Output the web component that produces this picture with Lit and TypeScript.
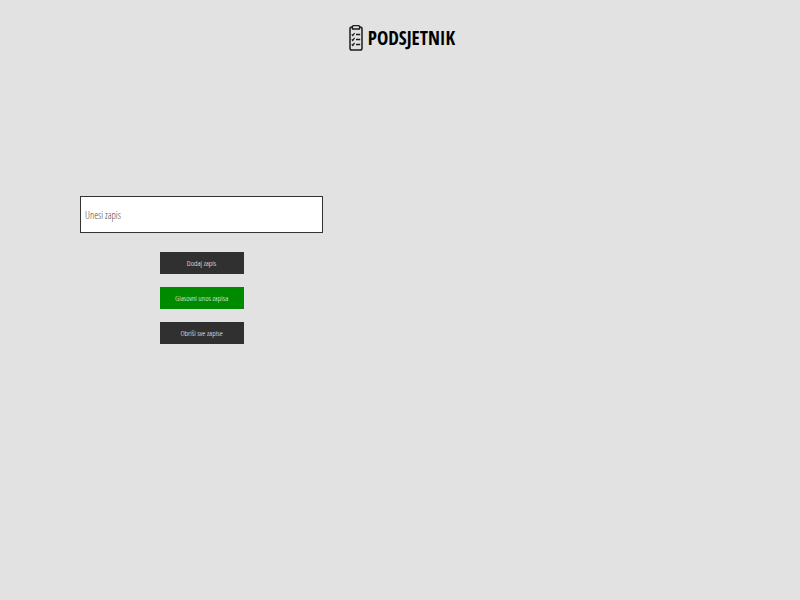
import { LitElement, html, css } from "lit";
import { customElement, state } from "lit/decorators.js";

@customElement("app-root")
export class AppRoot extends LitElement {
  @state() private notes: string[] = [];

  static styles = css`
    :host {
      display: block;
      min-height: 100vh;
      background: #e2e2e2;
      font-family: "Open Sans Condensed Light", "Roboto Condensed", "Liberation Sans", Arial, sans-serif;
      color: #000;
    }
    * {
      box-sizing: border-box;
    }
    .header {
      display: flex;
      justify-content: center;
      align-items: center;
      gap: 5px;
      padding: 24px 0 0 4px;
    }
    .logo {
      width: 14px;
      height: 27px;
    }
    .title {
      margin: 0;
      font-family: "Open Sans Condensed", "Roboto Condensed", "Liberation Sans", Arial, sans-serif;
      font-size: 19px;
      line-height: 24px;
      font-weight: 700;
    }
    .main {
      display: grid;
      grid-template-columns: 1fr 1fr;
      padding: 145px 10% 0;
    }
    .form {
      display: flex;
      flex-direction: column;
      align-items: center;
      gap: 13px;
      width: 76%;
    }
    .field {
      width: 100%;
      height: 37px;
      margin-bottom: 6px;
      padding: 0 4px;
      border: 1px solid #333;
      border-radius: 0;
      outline: 0;
      background: #fff;
      font-family: inherit;
      font-size: 10px;
    }
    .field::placeholder {
      color: #444;
      opacity: 1;
    }
    .button {
      width: 84px;
      height: 22px;
      padding: 0 0 2px;
      border: 0;
      background: #303030;
      color: #fff;
      font-family: inherit;
      font-size: 8px;
      cursor: pointer;
    }
    .voice {
      background: #008a00;
    }
    .notes {
      margin: 0;
      padding: 0 0 0 16px;
      font-size: 10px;
    }
  `;

  private add(event: Event) {
    event.preventDefault();
    const field = this.renderRoot.querySelector<HTMLInputElement>(".field")!;
    if (field.value.trim()) this.notes = [...this.notes, field.value.trim()];
    field.value = "";
  }

  render() {
    return html`
      <header class="header">
        <svg class="logo" viewBox="0 0 14 27" fill="none" stroke="#1c1c1c" aria-hidden="true">
          <rect x="1" y="3" width="12" height="23" rx="1.8" stroke-width="1.5" />
          <path d="M3.4 5V2.6L4.4 1.6H9.6L10.6 2.6V5Z" fill="#e2e2e2" stroke-width="1.4" stroke-linejoin="round" />
          <path d="M7 10.6H11.2M7 15.5H11.2M7 20.4H11.2" stroke-width="1.5" />
          <path d="M2.8 10.4L3.8 11.6L5.6 9M2.8 15.3L3.8 16.5L5.6 13.9M2.8 20.2L3.8 21.4L5.6 18.8" stroke-width="1.2" />
        </svg>
        <h1 class="title">PODSJETNIK</h1>
      </header>
      <main class="main">
        <form class="form" @submit=${this.add}>
          <input class="field" type="text" placeholder="Unesi zapis" aria-label="Unesi zapis" />
          <button class="button" type="submit">Dodaj zapis</button>
          <button class="button voice" type="button">Glasovni unos zapisa</button>
          <button class="button" type="button" @click=${() => (this.notes = [])}>Obriši sve zapise</button>
        </form>
        <ul class="notes">${this.notes.map((note) => html`<li>${note}</li>`)}</ul>
      </main>
    `;
  }
}
